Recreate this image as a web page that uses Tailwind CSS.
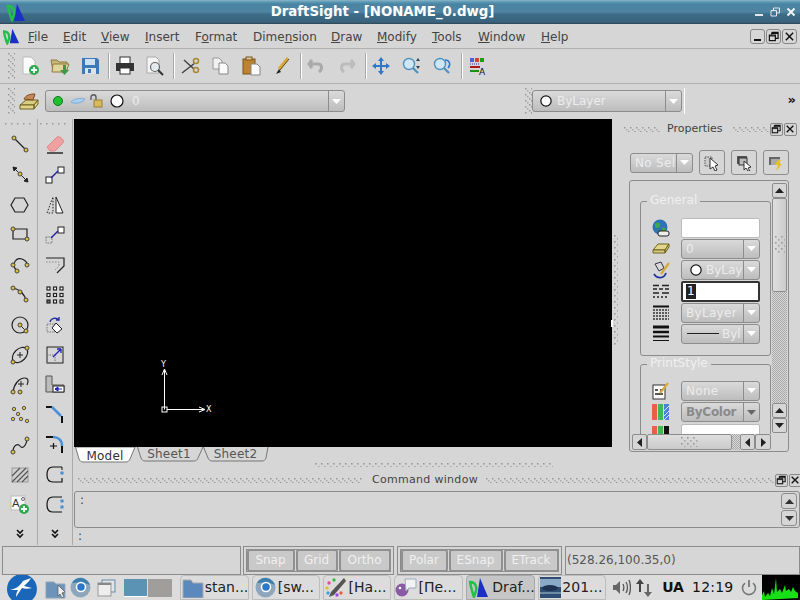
<!DOCTYPE html>
<html>
  <head>
    <title>DraftSight</title>
    <script src="https://cdn.jsdelivr.net/npm/@tailwindcss/browser@4"></script>
  </head>
  <body class="w-[800px] h-[600px] overflow-hidden bg-[#d6d6d6] font-['DejaVu_Sans',sans-serif] text-[#444] relative">
    <!-- shared patterns for the toolbar grips -->
    <svg width="0" height="0" class="absolute">
      <defs>
        <pattern id="grip" width="6" height="6" patternUnits="userSpaceOnUse">
          <rect x="0" y="0" width="1.5" height="1.5" fill="#999"/><rect x="2" y="2" width="1.5" height="1.5" fill="#aaa"/><rect x="4" y="4" width="1.5" height="1.5" fill="#999"/>
        </pattern>
        <pattern id="gripv" width="6" height="6" patternUnits="userSpaceOnUse">
          <rect x="0" y="0" width="1.6" height="1.6" fill="#9a9a9a"/><rect x="3" y="3" width="1.6" height="1.6" fill="#a6a6a6"/>
        </pattern>
        <pattern id="dith" width="2" height="2" patternUnits="userSpaceOnUse">
          <rect width="1" height="1" fill="#aaa"/><rect x="1" y="1" width="1" height="1" fill="#aaa"/>
        </pattern>
        <symbol id="arrow" viewBox="0 0 9 5"><path d="M0 0h9L4.500 5z" fill="#fff"/></symbol>
        <symbol id="restore" viewBox="0 0 12 12"><path d="M4 1.500h7v6.500H8M4 1.500V4M4 2.500h7" fill="none" stroke="#111" stroke-width="1.300"/><rect x="1.500" y="4.500" width="6.500" height="6" fill="none" stroke="#111" stroke-width="1.300"/><path d="M1.500 5.500h6.500" stroke="#111"/></symbol>
        <symbol id="close" viewBox="0 0 12 12"><path d="M2 2l8 8M10 2l-8 8" stroke="#111" stroke-width="1.600"/></symbol>
      </defs>
    </svg>

    <!-- title bar -->
    <div class="h-[24px] flex items-center pl-[2px] relative bg-[linear-gradient(#8fb4c4_0,#5a9ab5_2px,#4a83a2_4px,#4f84a2_12px,#3d6d89_14px,#3a627c_22px,#2c4656_24px)]">
      <svg class="w-[20px] h-[20px] ml-[3px]" viewBox="0 0 20 20"><path d="M12 2L20 19H9z" fill="#1b2fc4"/><path d="M3 4c5 0 7 4 6 9l-2 5C5 14 4 9 3 4z" fill="none" stroke="#22c04a" stroke-width="2.500"/></svg>
      <div class="flex-1 text-center text-white font-bold text-[13.300px] leading-none pr-[14px]">DraftSight - [NONAME_0.dwg]</div>
      <div class="flex items-center gap-[6px] pr-[4px]">
        <svg width="10" height="10" viewBox="0 0 10 10"><rect x="1" y="7" width="8" height="2" fill="#dfe8ee"/></svg>
        <svg width="10" height="10" viewBox="0 0 10 10"><path d="M3.500 1h6v5H7M3.500 1v2M1 3.500h5.500V9H1z" fill="none" stroke="#dfe8ee"/></svg>
        <svg width="10" height="10" viewBox="0 0 10 10"><path d="M1.500 1.500l7 7M8.500 1.500l-7 7" stroke="#eef3f6" stroke-width="2"/></svg>
      </div>
    </div>

    <!-- menu bar -->
    <div class="h-[25px] flex items-center border-b border-[#b0b0b0] pl-[3px] text-[12px] relative">
      <svg class="w-[17px] h-[17px]" viewBox="0 0 20 20"><path d="M11 1L19 18H8z" fill="#1b2fc4"/><path d="M1 4c5 0 7 4 6 9l-2 5C3 14 2 9 1 4z" fill="none" stroke="#22c04a" stroke-width="2.800"/></svg>
      <div class="flex ml-[8px] pt-[2px]">
        <span class="w-[35px]"><u>F</u>ile</span>
        <span class="w-[38px]"><u>E</u>dit</span>
        <span class="w-[44px]"><u>V</u>iew</span>
        <span class="w-[50px]"><u>I</u>nsert</span>
        <span class="w-[58px]">F<u>o</u>rmat</span>
        <span class="w-[78px]">Dime<u>n</u>sion</span>
        <span class="w-[46px]"><u>D</u>raw</span>
        <span class="w-[55px]"><u>M</u>odify</span>
        <span class="w-[46px]"><u>T</u>ools</span>
        <span class="w-[63px]"><u>W</u>indow</span>
        <span><u>H</u>elp</span>
      </div>
      <div class="ml-auto flex gap-[1px] pr-[3px]">
        <div class="w-[15px] h-[15px] border border-[#888] rounded-[3px] flex items-end justify-center pb-[2px]"><div class="w-[7px] h-[2px] bg-[#111]"></div></div>
        <div class="w-[15px] h-[15px] border border-[#888] rounded-[3px] flex items-center justify-center"><svg width="11" height="11"><use href="#restore"/></svg></div>
        <div class="w-[15px] h-[15px] border border-[#888] rounded-[3px] flex items-center justify-center"><svg width="11" height="11"><use href="#close"/></svg></div>
      </div>
    </div>

    <!-- standard toolbar -->
    <div class="h-[35px] flex items-center border-b border-[#b0b0b0] pl-[8px]">
      <svg width="7" height="26"><rect width="7" height="26" fill="url(#grip)"/></svg>
      <div class="flex items-center">
        <svg class="w-[20px] h-[20px] mx-[5px]" viewBox="0 0 20 20"><path d="M3 1h8l4 4v13H3z" fill="#fafafa" stroke="#bbb"/><circle cx="14" cy="14" r="5" fill="#2fa84f"/><path d="M14 11v6M11 14h6" stroke="#fff" stroke-width="1.800"/></svg>
        <svg class="w-[20px] h-[20px] mx-[5px]" viewBox="0 0 20 20"><path d="M1 4h6l2 2h8v9H3z" fill="#c9b777" stroke="#8d7b3e"/><path d="M3 8h16l-3 8H2z" fill="#e2d49c" stroke="#8d7b3e"/><path d="M13 9h3v5h3l-4.500 5L10 14h3z" fill="#3c9a4b"/></svg>
        <svg class="w-[20px] h-[18px] ml-[6px] mr-[5px]" viewBox="0 0 20 18"><path d="M1 1h15l2 2v14H1z" fill="#3f78b5"/><rect x="4" y="2" width="10" height="6" fill="#cfe0ef"/><rect x="4" y="11" width="11" height="6" fill="#dde3e8"/><rect x="7" y="12" width="3" height="4" fill="#3f78b5"/></svg>
        <div class="w-[2px] h-[26px] bg-white border-l border-[#a8a8a8] ml-[2px]"></div>
        <svg class="w-[20px] h-[20px] mx-[5px]" viewBox="0 0 20 20"><rect x="5" y="1" width="10" height="7" fill="#fff" stroke="#333"/><path d="M1 7h18v8H1z" fill="#333"/><rect x="5" y="12" width="10" height="6" fill="#fff" stroke="#333"/></svg>
        <svg class="w-[20px] h-[20px] mx-[5px]" viewBox="0 0 20 20"><path d="M2 1h9l3 3v13H2z" fill="#f4f4f4" stroke="#aaa"/><circle cx="10" cy="11" r="4.500" fill="#e2ebf0" stroke="#666" stroke-width="1.200"/><path d="M13 14l5 5" stroke="#333" stroke-width="2"/></svg>
        <div class="w-[2px] h-[26px] bg-white border-l border-[#a8a8a8] ml-[3px]"></div>
        <svg class="w-[20px] h-[18px] mx-[5px]" viewBox="0 0 20 18"><path d="M2 16L15 6M4 3l10 9" stroke="#444" stroke-width="1.500"/><circle cx="16" cy="4" r="2.500" fill="none" stroke="#a88a35" stroke-width="1.600"/><circle cx="16" cy="13" r="2.500" fill="none" stroke="#a88a35" stroke-width="1.600"/></svg>
        <svg class="w-[20px] h-[18px] ml-[6px] mr-[5px]" viewBox="0 0 20 18"><path d="M2 1h6l3 3v8H2z" fill="#f1f1f1" stroke="#999"/><path d="M8 6h6l3 3v8H8z" fill="#fafafa" stroke="#888"/></svg>
        <svg class="w-[20px] h-[20px] ml-[6px] mr-[5px]" viewBox="0 0 20 20"><rect x="1" y="3" width="12" height="15" fill="#bd8430" stroke="#7b5417"/><rect x="4" y="1" width="6" height="3" fill="#d8c7a0" stroke="#7b5417"/><path d="M9 8h6l3 3v8H9z" fill="#fafafa" stroke="#888"/></svg>
        <svg class="w-[20px] h-[20px] ml-[6px] mr-[5px]" viewBox="0 0 20 20"><path d="M15 2L6 13" stroke="#d8a838" stroke-width="3"/><path d="M6 13l-3 5 5-2z" fill="#222"/><path d="M16 3L7 14" stroke="#5d4a1c"/></svg>
        <div class="w-[2px] h-[26px] bg-white border-l border-[#a8a8a8] ml-[2px]"></div>
        <svg class="w-[20px] h-[18px] mx-[5px]" viewBox="0 0 20 18"><path d="M5 4L2 8l3 4M4 8h7c4 0 5 5 1 8" transform="translate(0 -1)" fill="none" stroke="#aaa" stroke-width="3"/></svg>
        <svg class="w-[20px] h-[18px] ml-[6px] mr-[5px]" viewBox="0 0 20 18"><path d="M13 4l3 4-3 4M14 8H7c-4 0-5 5-1 8" transform="translate(0 -1)" fill="none" stroke="#bcbcbc" stroke-width="3"/></svg>
        <div class="w-[2px] h-[26px] bg-white border-l border-[#a8a8a8] ml-[2px]"></div>
        <svg class="w-[20px] h-[18px] mx-[5px]" viewBox="0 0 20 18"><path d="M9 0l3 4h-2v4h4V6l4 3-4 3v-2h-4v4h2l-3 4-3-4h2v-4H4v2L0 9l4-3v2h4V4H6z" fill="#2f77c8"/></svg>
        <svg class="w-[20px] h-[18px] mx-[5px]" viewBox="0 0 20 18"><circle cx="7" cy="7" r="5.500" fill="#cfe6f5" stroke="#4f90bf" stroke-width="1.400"/><path d="M11 11l5 5" stroke="#4f90bf" stroke-width="2.200"/><path d="M16 1l2 3h-4zM16 12l2-3h-4z" fill="#345"/></svg>
        <svg class="w-[20px] h-[18px] ml-[6px] mr-[5px]" viewBox="0 0 20 18"><circle cx="7" cy="7" r="5.500" fill="#cfe6f5" stroke="#4f90bf" stroke-width="1.400"/><path d="M11 11l5 5" stroke="#4f90bf" stroke-width="2.200"/><path d="M12 3c5 0 6 5 3 8" fill="none" stroke="#2f77c8" stroke-width="1.500"/></svg>
        <div class="w-[2px] h-[26px] bg-white border-l border-[#a8a8a8] ml-[3px]"></div>
        <svg class="w-[18px] h-[20px] ml-[6px]" viewBox="0 0 18 20"><rect x="1" y="2" width="4" height="4" fill="#4a62d8"/><rect x="6" y="2" width="4" height="4" fill="#d04040"/><rect x="11" y="2" width="4" height="4" fill="#18a018"/><path d="M1 8h10" stroke="#2030a0" stroke-dasharray="1 1"/><path d="M1 11h10" stroke="#b01818" stroke-width="2"/><path d="M1 15h9" stroke="#189018" stroke-width="2"/><text x="10" y="19" font-size="9" font-family="DejaVu Sans" fill="#111">A</text></svg>
      </div>
    </div>

    <!-- layer toolbar -->
    <div class="h-[35px] flex items-center pl-[8px] pb-[1px] relative">
      <svg width="7" height="26" class="mr-[4px]"><rect width="7" height="26" fill="url(#grip)"/></svg>
      <svg class="w-[20px] h-[20px]" viewBox="0 0 20 20"><path d="M1 14l6-5h12l-4 5z" fill="#d8cc80" stroke="#6f6320"/><path d="M1 14h14v4H1zM15 14l4-5v4l-4 5z" fill="#e0d48a" stroke="#6f6320"/><path d="M5 8c2-4 6-5 11-5l-2 6z" fill="#c8895a" stroke="#7a4a26"/></svg>
      <div class="ml-[6px] w-[300px] h-[22px] flex rounded-[3px] border border-[#8c8c8c] bg-linear-to-b from-[#dadada] to-[#bdbdbd]">
        <div class="flex-1 flex items-center pl-[6px]">
          <svg class="w-[12px] h-[12px]" viewBox="0 0 12 12"><circle cx="6" cy="6" r="4.500" fill="#1fc02f" stroke="#0d7a18"/></svg>
          <svg class="w-[16px] h-[8px] ml-[6px]" viewBox="0 0 16 8"><path d="M1 5c3-4 10-4 14-3-1 3-10 6-14 3z" fill="#a8cff0" stroke="#6fa5d2" stroke-width="0.800"/></svg>
          <svg class="w-[14px] h-[16px] ml-[3px]" viewBox="0 0 14 16"><path d="M2 7V4c0-3 5-3 5 0v3" fill="none" stroke="#555" stroke-width="1.300"/><rect x="5" y="7" width="8" height="7" fill="#d9b95c" stroke="#8d7226" stroke-width="0.800"/></svg>
          <svg class="w-[14px] h-[14px] ml-[7px]" viewBox="0 0 14 14"><circle cx="7" cy="7" r="6" fill="#fff" stroke="#111" stroke-width="1.200"/></svg>
          <span class="ml-[8px] text-[12px] text-[#ececec]">0</span>
        </div>
        <div class="w-[16px] border-l border-[#8c8c8c] flex items-center justify-center"><svg width="9" height="5"><use href="#arrow"/></svg></div>
      </div>
      <svg width="7" height="26" class="ml-[180px]"><rect width="7" height="26" fill="url(#grip)"/></svg>
      <div class="w-[150px] h-[22px] flex rounded-[3px] border border-[#8c8c8c] bg-linear-to-b from-[#dadada] to-[#bdbdbd]">
        <div class="flex-1 flex items-center pl-[7px]">
          <svg class="w-[12px] h-[12px]" viewBox="0 0 14 14"><circle cx="7" cy="7" r="6" fill="#fff" stroke="#111" stroke-width="1.400"/></svg>
          <span class="ml-[5px] text-[12px] text-[#ececec]">ByLayer</span>
        </div>
        <div class="w-[16px] border-l border-[#8c8c8c] flex items-center justify-center"><svg width="9" height="5"><use href="#arrow"/></svg></div>
      </div>
      <div class="w-px h-[26px] bg-white ml-[2px]"></div>
      <span class="ml-auto pr-[4px] text-[13px] font-bold text-[#111] leading-none pb-[3px]">»</span>
    </div>

    <!-- workspace -->
    <div class="flex h-[426px] overflow-hidden">
      <!-- drawing tools -->
      <div class="w-[74px] shrink-0 flex pl-[3px]">
        <div class="w-[35px] border-r border-[#aaa] flex flex-col items-center pt-[4px]">
          <svg width="30" height="6" class="mb-[10px]"><rect width="30" height="6" fill="url(#grip)"/></svg>
          <div class="flex flex-col gap-[10px] items-center">
            <svg class="w-[20px] h-[20px]" viewBox="0 0 20 20"><path d="M4 3l12 12" stroke="#222" stroke-width="1.200"/><circle cx="4" cy="3" r="2" fill="#e0c040" stroke="#444"/><circle cx="16" cy="15" r="2" fill="#e0c040" stroke="#444"/></svg>
            <svg class="w-[20px] h-[20px]" viewBox="0 0 20 20"><path d="M3 2l15 15M3 2l1 4 3-3zM18 17l-4-1 3-3z" stroke="#222" fill="#222"/><circle cx="10" cy="9" r="2" fill="#e0c040" stroke="#444"/></svg>
            <svg class="w-[20px] h-[20px]" viewBox="0 0 20 20"><path d="M5 3h9l4 7-4 7H5l-4-7z" fill="none" stroke="#222" stroke-width="1.200"/></svg>
            <svg class="w-[20px] h-[20px]" viewBox="0 0 20 20"><path d="M4 5h14v10H4z" transform="translate(-1 -1)" fill="none" stroke="#222" stroke-width="1.200"/><circle cx="3" cy="4" r="2" fill="#e0c040" stroke="#444"/><circle cx="17" cy="14" r="2" fill="#e0c040" stroke="#444"/></svg>
            <svg class="w-[20px] h-[20px]" viewBox="0 0 20 20"><path d="M7 16C0 9 7 0 14 5c2 1 3 3 3 5" fill="none" stroke="#222" stroke-width="1.200"/><circle cx="3" cy="10" r="2" fill="#e0c040" stroke="#444"/><circle cx="7" cy="16" r="2" fill="#e0c040" stroke="#444"/><circle cx="17" cy="10" r="2" fill="#e0c040" stroke="#444"/></svg>
            <svg class="w-[20px] h-[20px]" viewBox="0 0 20 20"><path d="M3 3c6 1 12 6 13 13" fill="none" stroke="#222" stroke-width="1.200"/><circle cx="3" cy="3" r="2" fill="#e0c040" stroke="#444"/><circle cx="10" cy="7" r="2" fill="#e0c040" stroke="#444"/><circle cx="16" cy="15" r="2" fill="#e0c040" stroke="#444"/></svg>
            <svg class="w-[20px] h-[20px]" viewBox="0 0 20 20"><circle cx="10" cy="10" r="8" fill="none" stroke="#222" stroke-width="1.200"/><path d="M10 10l6 6" stroke="#222"/><circle cx="10" cy="10" r="2" fill="#e0c040" stroke="#444"/><circle cx="16" cy="16" r="2" fill="#e0c040" stroke="#444"/></svg>
            <svg class="w-[20px] h-[20px]" viewBox="0 0 20 20"><ellipse cx="10" cy="10" rx="9" ry="6" transform="rotate(-45 10 10)" fill="none" stroke="#222" stroke-width="1.200"/><path d="M7 10h6M10 7v6" stroke="#222"/><circle cx="3" cy="17" r="2" fill="#e0c040" stroke="#444"/><circle cx="17" cy="3" r="2" fill="#e0c040" stroke="#444"/></svg>
            <svg class="w-[20px] h-[20px]" viewBox="0 0 20 20"><path d="M3 17C4 9 9 3 15 3c3 0 4 3 2 7" fill="none" stroke="#222" stroke-width="1.200"/><path d="M8 9h6M11 6v6" stroke="#222"/><circle cx="3" cy="17" r="2" fill="#e0c040" stroke="#444"/><circle cx="10" cy="17" r="2" fill="#e0c040" stroke="#444"/></svg>
            <svg class="w-[20px] h-[20px]" viewBox="0 0 20 20"><g fill="#e0c040" stroke="#555"><circle cx="4" cy="4" r="1.700"/><circle cx="14" cy="3" r="1.700"/><circle cx="8" cy="9" r="1.700"/><circle cx="3" cy="14" r="1.700"/><circle cx="11" cy="14" r="1.700"/><circle cx="17" cy="16" r="1.700"/></g></svg>
            <svg class="w-[20px] h-[20px]" viewBox="0 0 20 20"><path d="M3 17c0-7 5-9 7-6s6 1 7-7" fill="none" stroke="#222" stroke-width="1.200"/><circle cx="3" cy="17" r="2" fill="#e0c040" stroke="#444"/><circle cx="17" cy="4" r="2" fill="#e0c040" stroke="#444"/></svg>
            <svg class="w-[20px] h-[20px]" viewBox="0 0 20 20"><rect x="2" y="3" width="16" height="14" fill="#cfcfcf" stroke="#999"/><path d="M2 11l8-8M2 17L16 3M7 17L18 6M12 17l6-6" stroke="#555" stroke-width="1.200"/></svg>
            <svg class="w-[20px] h-[20px]" viewBox="0 0 20 20"><rect x="1" y="1" width="14" height="14" fill="#fafafa" stroke="#bbb"/><text x="2" y="12" font-size="11" font-family="DejaVu Sans" fill="#333">A</text><circle cx="13" cy="4" r="1.500" fill="none" stroke="#666"/><circle cx="14" cy="14" r="5" fill="#2fa84f"/><path d="M14 11v6M11 14h6" stroke="#fff" stroke-width="1.800"/></svg>
            <svg class="w-[20px] h-[20px]" viewBox="0 0 20 20"><path d="M7 6l3 3 3-3M7 10l3 3 3-3" transform="translate(0 -1)" fill="none" stroke="#111" stroke-width="1.600"/></svg>
          </div>
        </div>
        <div class="w-[35px] border-r border-[#aaa] flex flex-col items-center pt-[4px]">
          <svg width="30" height="6" class="mb-[10px]"><rect width="30" height="6" fill="url(#grip)"/></svg>
          <div class="flex flex-col gap-[10px] items-center">
            <svg class="w-[20px] h-[20px]" viewBox="0 0 20 20"><path d="M2 12L12 2c2-1 5 1 6 3 1 1 0 3-1 4l-7 7H5z" fill="#f0a0a0" stroke="#d88"/><path d="M2 18h16" stroke="#555" stroke-width="2"/></svg>
            <svg class="w-[20px] h-[20px]" viewBox="0 0 20 20"><rect x="1" y="12" width="6" height="6" fill="#fff" stroke="#222"/><rect x="13" y="2" width="6" height="6" fill="#fff" stroke="#222"/><path d="M6 13l7-7" stroke="#2020a0" stroke-width="1.500"/></svg>
            <svg class="w-[20px] h-[20px]" viewBox="0 0 20 20"><path d="M2 18L8 2v16z" fill="none" stroke="#222" stroke-dasharray="1.500 1.500"/><path d="M11 2l7 16h-7z" fill="#fff" stroke="#222"/></svg>
            <svg class="w-[20px] h-[20px]" viewBox="0 0 20 20"><rect x="1" y="12" width="6" height="6" fill="none" stroke="#777" stroke-dasharray="1.500 1"/><rect x="13" y="2" width="6" height="6" fill="#fff" stroke="#222"/><path d="M6 13l7-7" stroke="#2020a0" stroke-width="1.500"/></svg>
            <svg class="w-[20px] h-[20px]" viewBox="0 0 20 20"><path d="M1 3h18v8l-7 7" fill="none" stroke="#222" stroke-width="1.200"/><path d="M1 7h13v4l-4 4" fill="none" stroke="#888" stroke-dasharray="1.500 1.500"/></svg>
            <svg class="w-[20px] h-[20px]" viewBox="0 0 20 20"><g fill="#fff" stroke="#222" stroke-width="1.200"><rect x="2" y="2" width="3" height="3"/><rect x="8.500" y="2" width="3" height="3"/><rect x="15" y="2" width="3" height="3"/><rect x="2" y="8.500" width="3" height="3"/><rect x="8.500" y="8.500" width="3" height="3"/><rect x="15" y="8.500" width="3" height="3"/><rect x="2" y="15" width="3" height="3" fill="#777"/><rect x="8.500" y="15" width="3" height="3"/><rect x="15" y="15" width="3" height="3"/></g></svg>
            <svg class="w-[20px] h-[20px]" viewBox="0 0 20 20"><rect x="2" y="9" width="8" height="8" fill="none" stroke="#777" stroke-dasharray="1.500 1"/><path d="M11 8l6 6-5 4-5-5z" fill="#fff" stroke="#222"/><path d="M5 7c1-4 6-5 9-2M14 2v3h-3" fill="none" stroke="#2030a0" stroke-width="1.300"/></svg>
            <svg class="w-[20px] h-[20px]" viewBox="0 0 20 20"><rect x="2" y="2" width="16" height="16" fill="none" stroke="#222"/><rect x="2" y="10" width="8" height="8" fill="none" stroke="#777" stroke-dasharray="1.500 1"/><path d="M8 12l8-8M16 4v4M16 4h-4" stroke="#2020c0" stroke-width="1.300" fill="none"/></svg>
            <svg class="w-[20px] h-[20px]" viewBox="0 0 20 20"><path d="M1 1h6v9h12v7H1z" fill="#bdbdbd" stroke="#555"/><rect x="8" y="11" width="11" height="6" fill="#fff" stroke="#222"/><path d="M10 14h7M10 14l3-2v4z" stroke="#2020c0" fill="#2020c0"/></svg>
            <svg class="w-[20px] h-[20px]" viewBox="0 0 20 20"><path d="M1 2h6" stroke="#111" stroke-width="2"/><path d="M7 2l9 9" stroke="#4a90d9" stroke-width="2.500"/><path d="M17 11v7" stroke="#111" stroke-width="2"/></svg>
            <svg class="w-[20px] h-[20px]" viewBox="0 0 20 20"><path d="M1 2h7" stroke="#111" stroke-width="2"/><path d="M8 2c5 0 9 3 9 9" fill="none" stroke="#4a90d9" stroke-width="2.500"/><path d="M17 11v7" stroke="#111" stroke-width="2"/><path d="M5 11h7M8.500 8v6" stroke="#111" stroke-width="1.200"/></svg>
            <svg class="w-[20px] h-[20px]" viewBox="0 0 20 20"><path d="M17 2H8C3 2 2 6 2 10s1 7 6 7h9v-4" fill="none" stroke="#111" stroke-width="1.200"/><path d="M17 2v3" stroke="#111"/><circle cx="17" cy="8" r="1.800" fill="#4a90d9"/></svg>
            <svg class="w-[20px] h-[20px]" viewBox="0 0 20 20"><path d="M17 2H8C3 2 2 6 2 10s1 7 6 7h9" fill="none" stroke="#111" stroke-width="1.200"/><circle cx="17" cy="6" r="1.800" fill="#4a90d9"/><circle cx="17" cy="12" r="1.800" fill="#4a90d9"/></svg>
            <svg class="w-[20px] h-[20px]" viewBox="0 0 20 20"><path d="M7 6l3 3 3-3M7 10l3 3 3-3" transform="translate(0 -1)" fill="none" stroke="#111" stroke-width="1.600"/></svg>
          </div>
        </div>
      </div>

      <!-- drawing area and command window -->
      <div class="flex-1 min-w-0 flex flex-col">
        <div class="flex h-[350px] shrink-0">
          <div class="w-[538px] shrink-0 flex flex-col">
            <div class="h-[328px] bg-black relative">
              <svg class="absolute left-[85px] top-[238px]" width="60" height="60" viewBox="0 0 60 60">
                <path d="M5.500 52.500V13M3 18l2.500-6 2.500 6M8 52.500h37M40 50l6 2.500-6 2.500" fill="none" stroke="#fff"/>
                <rect x="3" y="50" width="5" height="5" fill="none" stroke="#fff"/>
                <text x="2" y="10" font-size="8" font-family="DejaVu Sans" fill="#fff">Y</text>
                <text x="47" y="55" font-size="8" font-family="DejaVu Sans" fill="#fff">X</text>
              </svg>
            </div>
            <!-- sheet tabs -->
            <div class="relative flex h-[22px] text-[12px] tracking-[0.2px]">
              <svg class="absolute left-0 top-0" width="200" height="18" viewBox="0 0 200 18">
                <path d="M63.500 0L67 11c1 2 2 3 4 3h49c2 0 3-1 4-3l5-11" fill="none" stroke="#777"/>
                <path d="M129.500 0L134 11c1 2 2 3 4 3h50c2 0 3-1 4-3l2-11" fill="none" stroke="#777"/>
                <path d="M1.500 0L5 12c1 2 2 3 4 3h43c2 0 3-1 4-3l5-12z" fill="#fff" stroke="#777"/>
              </svg>
              <div class="relative ml-[1px] w-[60px] text-center leading-[16px] pt-[1px] text-[#333]">Model</div>
              <div class="relative w-[68px] text-center leading-[15px] text-[#555]">Sheet1</div>
              <div class="relative w-[65px] text-center leading-[15px] text-[#555]">Sheet2</div>
            </div>
          </div>

          <!-- properties palette -->
          <div class="flex-1 min-w-0 relative">
            <div class="absolute left-[-1px] top-[201px] w-[2px] h-[7px] bg-white"></div>
            <svg class="absolute left-[2px] top-[116px]" width="4" height="110"><rect width="4" height="110" fill="url(#gripv)"/></svg>
            <div class="h-[19px] flex items-center pt-[1px] pl-[12px]">
              <svg width="36" height="5"><rect width="36" height="5" fill="url(#grip)"/></svg>
              <span class="ml-[7px] pt-[1px] text-[11px] text-[#444]">Properties</span>
              <svg class="ml-[10px]" width="36" height="5"><rect width="36" height="5" fill="url(#grip)"/></svg>
              <div class="ml-[1px] w-[13px] h-[13px] border border-[#888] rounded-[2px] flex items-center justify-center"><svg width="10" height="10"><use href="#restore"/></svg></div>
              <div class="ml-[1px] w-[13px] h-[13px] border border-[#888] rounded-[2px] flex items-center justify-center"><svg width="10" height="10"><use href="#close"/></svg></div>
            </div>
            <div class="flex items-center h-[25px] mt-[12px] pl-[18px]">
              <div class="w-[63px] h-[20px] flex rounded-[3px] border border-[#8c8c8c] bg-linear-to-b from-[#dadada] to-[#bdbdbd]">
                <div class="flex-1 pl-[4px] text-[12px] leading-[19px] text-[#ececec] tracking-[0.3px] whitespace-nowrap">No Sel</div>
                <div class="w-[16px] border-l border-[#8c8c8c] flex items-center justify-center"><svg width="9" height="5"><use href="#arrow"/></svg></div>
              </div>
              <div class="ml-[6px] w-[26px] h-[25px] rounded-[3px] border border-[#8c8c8c] flex items-center justify-center">
                <svg width="16" height="16" viewBox="0 0 16 16"><rect x="1" y="2" width="7" height="9" fill="#ccc" stroke="#555" stroke-dasharray="1.500 1"/><path d="M6 3l8 7-3 1 2 4-2 1-2-4-3 2z" fill="#fff" stroke="#333"/></svg>
              </div>
              <div class="ml-[6px] w-[26px] h-[25px] rounded-[3px] border border-[#8c8c8c] flex items-center justify-center">
                <svg width="16" height="16" viewBox="0 0 16 16"><rect x="1" y="1" width="10" height="8" fill="#555"/><rect x="3" y="3" width="8" height="7" fill="#bbb" stroke="#333"/><path d="M8 6l7 6-3 1 2 3-2 0-2-3-2 2z" fill="#fff" stroke="#333"/></svg>
              </div>
              <div class="ml-[6px] w-[26px] h-[25px] rounded-[3px] border border-[#8c8c8c] flex items-center justify-center">
                <svg width="16" height="16" viewBox="0 0 16 16"><rect x="1" y="2" width="11" height="8" fill="#666"/><rect x="3" y="4" width="9" height="6" fill="#aaa"/><path d="M10 5l-3 5h3l-2 6 6-7h-3l2-4z" fill="#e8c020"/></svg>
              </div>
            </div>

            <!-- scroll area -->
            <div class="absolute left-[17px] top-[61px] w-[160px] h-[272px] border border-[#8c8c8c] rounded-[3px] overflow-hidden">
              <div class="absolute left-0 top-0 w-[142px] h-[253px] overflow-hidden">
                <div class="absolute left-[10px] top-[20px] w-[131px] h-[155px] border border-[#8c8c8c] rounded-[3px]">
                  <span class="absolute left-[6px] -top-[8px] px-[3px] bg-[#d6d6d6] text-[12px] leading-none text-[#f0f0f0]">General</span>
                  <div class="absolute left-[11px] top-[15px] w-[108px] flex flex-col">
                    <div class="flex items-center h-[21px]">
                      <svg class="w-[18px] h-[18px] shrink-0" viewBox="0 0 18 18"><circle cx="8" cy="8" r="7.500" fill="#2f72b8"/><path d="M3 5c3-3 6-1 5 2s-4 2-5 1zM10 9c3-1 5 1 3 4s-4 1-3-4z" fill="#3fa84a"/><rect x="6" y="12" width="11" height="5" rx="2" fill="#eee" stroke="#222"/></svg>
                      <div class="ml-[11px] w-[79px] h-[20px] bg-white rounded-[2px] border border-[#bbb]"></div>
                    </div>
                    <div class="flex items-center h-[21px]">
                      <svg class="w-[18px] h-[13px] shrink-0" viewBox="0 0 18 13"><path d="M1 8l5-6h11l-4 6z" fill="#e2d68c" stroke="#6f6320"/><path d="M1 8h12v3H1zM13 8l4-6v3l-4 6z" fill="#d8cc80" stroke="#6f6320"/></svg>
                      <div class="ml-[11px] w-[79px] h-[20px] flex rounded-[3px] border border-[#8c8c8c] bg-linear-to-b from-[#dadada] to-[#bdbdbd]">
                        <div class="flex-1 pl-[4px] text-[12px] leading-[19px] text-[#ececec]">0</div>
                        <div class="w-[16px] border-l border-[#8c8c8c] flex items-center justify-center"><svg width="9" height="5"><use href="#arrow"/></svg></div>
                      </div>
                    </div>
                    <div class="flex items-center h-[21px]">
                      <svg class="w-[18px] h-[18px] shrink-0" viewBox="0 0 18 18"><path d="M3 3l6-2 3 6-5 3z" fill="#d8d8d8" stroke="#334"/><path d="M17 2L9 13" stroke="#d8a838" stroke-width="2.200"/><path d="M2 13c3 5 10 5 12-1" fill="none" stroke="#2030a0" stroke-width="1.800"/></svg>
                      <div class="ml-[11px] w-[79px] h-[20px] flex rounded-[3px] border border-[#8c8c8c] bg-linear-to-b from-[#dadada] to-[#bdbdbd]">
                        <div class="flex-1 min-w-0 flex items-center pl-[8px] overflow-hidden">
                          <svg class="w-[12px] h-[12px] shrink-0" viewBox="0 0 14 14"><circle cx="7" cy="7" r="6" fill="#fff" stroke="#111" stroke-width="1.400"/></svg>
                          <span class="ml-[4px] text-[12px] text-[#ececec]">ByLay</span>
                        </div>
                        <div class="w-[16px] border-l border-[#8c8c8c] flex items-center justify-center"><svg width="9" height="5"><use href="#arrow"/></svg></div>
                      </div>
                    </div>
                    <div class="flex items-center h-[22px]">
                      <svg class="w-[18px] h-[15px] shrink-0" viewBox="0 0 18 15"><path d="M1 1.500h6M10 1.500h7M1 5h4M7 5h4M13 5h4M1 9h6M10 9h7M1 13h2M5 13h2M9 13h2M13 13h2" stroke="#222" stroke-width="1.600"/></svg>
                      <div class="ml-[11px] w-[79px] h-[21px] bg-white border-2 border-[#333] rounded-[2px] flex items-center pl-[3px]"><span class="bg-[#222] text-white text-[12px] leading-[15px] px-[1px]">1</span></div>
                    </div>
                    <div class="flex items-center h-[21px]">
                      <svg class="w-[18px] h-[16px] shrink-0" viewBox="0 0 18 16"><path d="M1 1.500h16" stroke="#111" stroke-width="2"/><path d="M1 5h16M1 8h16M1 11h16M1 14h16" stroke="#333" stroke-width="1.500" stroke-dasharray="2 1"/></svg>
                      <div class="ml-[11px] w-[79px] h-[20px] flex rounded-[3px] border border-[#8c8c8c] bg-linear-to-b from-[#dadada] to-[#bdbdbd]">
                        <div class="flex-1 pl-[4px] text-[12px] leading-[19px] text-[#ececec] tracking-[0.3px]">ByLayer</div>
                        <div class="w-[16px] border-l border-[#8c8c8c] flex items-center justify-center"><svg width="9" height="5"><use href="#arrow"/></svg></div>
                      </div>
                    </div>
                    <div class="flex items-center h-[21px]">
                      <svg class="w-[18px] h-[17px] shrink-0" viewBox="0 0 18 17"><path d="M1 2h16" stroke="#111" stroke-width="3"/><path d="M1 7h16" stroke="#111" stroke-width="2.500"/><path d="M1 11.500h16" stroke="#111" stroke-width="2"/><path d="M1 15.500h16" stroke="#111"/></svg>
                      <div class="ml-[11px] w-[79px] h-[20px] flex rounded-[3px] border border-[#8c8c8c] bg-linear-to-b from-[#dadada] to-[#bdbdbd]">
                        <div class="flex-1 min-w-0 flex items-center pl-[5px] overflow-hidden">
                          <div class="w-[32px] h-px bg-[#222] shrink-0"></div>
                          <span class="ml-[3px] text-[12px] text-[#ececec]">Byl</span>
                        </div>
                        <div class="w-[16px] border-l border-[#8c8c8c] flex items-center justify-center"><svg width="9" height="5"><use href="#arrow"/></svg></div>
                      </div>
                    </div>
                  </div>
                </div>
                <div class="absolute left-[10px] top-[183px] w-[131px] h-[120px] border border-[#8c8c8c] rounded-[3px]">
                  <span class="absolute left-[6px] -top-[8px] px-[3px] bg-[#d6d6d6] text-[12px] leading-none text-[#f0f0f0]">PrintStyle</span>
                  <div class="absolute left-[11px] top-[15px] w-[108px] flex flex-col">
                    <div class="flex items-center h-[21px]">
                      <svg class="w-[18px] h-[18px] shrink-0" viewBox="0 0 18 18"><rect x="1" y="3" width="12" height="14" fill="#fafafa" stroke="#333"/><path d="M3 8h3M8 8h3M3 12h8" stroke="#222" stroke-width="1.500"/><path d="M16 1L8 11" stroke="#d8a838" stroke-width="2.200"/></svg>
                      <div class="ml-[11px] w-[79px] h-[20px] flex rounded-[3px] border border-[#8c8c8c] bg-linear-to-b from-[#dadada] to-[#bdbdbd]">
                        <div class="flex-1 pl-[4px] text-[12px] leading-[19px] text-[#ececec] tracking-[0.3px]">None</div>
                        <div class="w-[16px] border-l border-[#8c8c8c] flex items-center justify-center"><svg width="9" height="5"><use href="#arrow"/></svg></div>
                      </div>
                    </div>
                    <div class="flex items-center h-[22px]">
                      <svg class="w-[18px] h-[18px] shrink-0" viewBox="0 0 18 18"><rect x="0" y="1" width="5" height="16" fill="#e8604a"/><rect x="6" y="1" width="5" height="16" fill="#3fb85a"/><rect x="12" y="1" width="5" height="16" fill="#4a82d8"/><path d="M12 8l5-5M12 13l5-5M12 17l5-5" stroke="#dce8f8"/></svg>
                      <div class="ml-[11px] w-[79px] h-[20px] flex rounded-[3px] border border-[#8c8c8c] bg-linear-to-b from-[#dadada] to-[#bdbdbd]">
                        <div class="flex-1 pl-[4px] text-[12px] leading-[19px] text-[#8a8a8a] font-bold tracking-[-0.3px]">ByColor</div>
                        <div class="w-[16px] border-l border-[#8c8c8c] flex items-center justify-center"><svg width="9" height="5"><path d="M0 0h9L4.500 5z" fill="#666"/></svg></div>
                      </div>
                    </div>
                    <div class="flex items-center h-[21px]">
                      <svg class="w-[18px] h-[18px] shrink-0" viewBox="0 0 18 18"><rect x="0" y="1" width="5" height="16" fill="#e8604a"/><rect x="6" y="1" width="5" height="16" fill="#3fb85a"/><rect x="12" y="1" width="5" height="16" fill="#111"/></svg>
                      <div class="ml-[11px] w-[79px] h-[20px] bg-white rounded-[2px] border border-[#bbb]"></div>
                    </div>
                  </div>
                </div>
              </div>
              <!-- vertical scrollbar -->
              <div class="absolute right-[1px] top-[2px] w-[15px] h-[250px] flex flex-col">
                <div class="h-[15px] border border-[#8c8c8c] rounded-[2px] flex items-center justify-center"><svg width="9" height="5"><path d="M0 5h9L4.500 0z" fill="#222"/></svg></div>
                <div class="h-[94px] border border-[#8c8c8c] rounded-[2px] bg-linear-to-r from-[#dedede] to-[#cbcbcb] flex items-center justify-center"><svg width="10" height="18"><rect width="10" height="18" fill="url(#gripv)"/></svg></div>
                <svg class="flex-1 w-full"><rect width="100%" height="100%" fill="url(#dith)"/></svg>
                <div class="h-[15px] border border-[#8c8c8c] rounded-[2px] flex items-center justify-center"><svg width="9" height="5"><path d="M0 5h9L4.500 0z" fill="#222"/></svg></div>
                <div class="h-[15px] border border-[#8c8c8c] rounded-[2px] flex items-center justify-center"><svg width="9" height="5"><path d="M0 0h9L4.500 5z" fill="#222"/></svg></div>
              </div>
              <!-- horizontal scrollbar -->
              <div class="absolute left-[2px] top-[253px] w-[139px] h-[16px] flex">
                <div class="w-[15px] border border-[#8c8c8c] rounded-[2px] flex items-center justify-center"><svg width="5" height="9"><path d="M5 0v9L0 4.500z" fill="#222"/></svg></div>
                <div class="w-[85px] border border-[#8c8c8c] rounded-[2px] bg-linear-to-b from-[#dedede] to-[#cbcbcb] flex items-center justify-center"><svg width="18" height="10"><rect width="18" height="10" fill="url(#gripv)"/></svg></div>
                <svg class="flex-1 h-full"><rect width="100%" height="100%" fill="url(#dith)"/></svg>
                <div class="w-[15px] border border-[#8c8c8c] rounded-[2px] flex items-center justify-center"><svg width="5" height="9"><path d="M5 0v9L0 4.500z" fill="#222"/></svg></div>
                <div class="w-[16px] border border-[#8c8c8c] rounded-[2px] flex items-center justify-center"><svg width="5" height="9"><path d="M0 0v9L5 4.500z" fill="#222"/></svg></div>
              </div>
            </div>
          </div>
        </div>

        <!-- command window -->
        <div class="flex-1 relative flex flex-col">
          <svg class="absolute left-[241px] -top-[6px]" width="238" height="4"><rect width="238" height="4" fill="url(#gripv)"/></svg>
          <div class="h-[22px] flex items-center pl-[4px]">
            <svg width="284" height="5" class="shrink-0"><rect width="284" height="5" fill="url(#grip)"/></svg>
            <span class="ml-[10px] text-[11px] tracking-[0.3px] whitespace-nowrap">Command window</span>
            <svg class="ml-[8px] shrink-0" width="288" height="5"><rect width="288" height="5" fill="url(#grip)"/></svg>
            <div class="ml-[1px] w-[13px] h-[13px] shrink-0 border border-[#888] rounded-[2px] flex items-center justify-center"><svg width="10" height="10"><use href="#restore"/></svg></div>
            <div class="ml-[1px] w-[13px] h-[13px] shrink-0 border border-[#888] rounded-[2px] flex items-center justify-center"><svg width="10" height="10"><use href="#close"/></svg></div>
          </div>
          <div class="h-[37px] border border-[#8c8c8c] rounded-[3px] relative pl-[5px] text-[12px] leading-[14px] pt-[1px]">
            :
            <div class="absolute right-[2px] top-[1px] w-[16px] flex flex-col gap-[1px]">
              <div class="h-[16px] border border-[#8c8c8c] rounded-[3px] flex items-center justify-center"><svg width="9" height="5"><path d="M0 5h9L4.500 0z" fill="#333"/></svg></div>
              <div class="h-[16px] border border-[#8c8c8c] rounded-[3px] flex items-center justify-center"><svg width="9" height="5"><path d="M0 0h9L4.500 5z" fill="#333"/></svg></div>
            </div>
          </div>
          <div class="pl-[4px] text-[12px] leading-[16px]">:</div>
        </div>
      </div>
    </div>

    <!-- status bar -->
    <div class="h-[30px] flex items-center pl-[2px] gap-[2px]">
      <div class="w-[239px] h-[29px] border border-[#8c8c8c]"></div>
      <div class="h-[29px] w-[151px] border border-[#8c8c8c] flex items-center justify-center gap-[1px] shadow-[inset_0_0_0_2px_#d6d6d6,inset_0_0_0_3px_#8c8c8c] text-[12px] text-[#f0f0f0]">
        <div class="w-[48px] h-[23px] border-2 border-[#909090] rounded-[3px] bg-[#c9c9c9] text-center leading-[19px]">Snap</div>
        <div class="w-[42px] h-[23px] border-2 border-[#909090] rounded-[3px] bg-[#c9c9c9] text-center leading-[19px]">Grid</div>
        <div class="w-[52px] h-[23px] border-2 border-[#909090] rounded-[3px] bg-[#c9c9c9] text-center leading-[19px]">Ortho</div>
      </div>
      <div class="ml-[1px] h-[29px] w-[165px] border border-[#8c8c8c] flex items-center justify-center gap-[1px] shadow-[inset_0_0_0_2px_#d6d6d6,inset_0_0_0_3px_#8c8c8c] text-[12px] text-[#f0f0f0]">
        <div class="w-[47px] h-[23px] border-2 border-[#909090] rounded-[3px] bg-[#c9c9c9] text-center leading-[19px]">Polar</div>
        <div class="w-[54px] h-[23px] border-2 border-[#909090] rounded-[3px] bg-[#c9c9c9] text-center leading-[19px]">ESnap</div>
        <div class="w-[55px] h-[23px] border-2 border-[#909090] rounded-[3px] bg-[#c9c9c9] text-center leading-[19px]">ETrack</div>
      </div>
      <div class="ml-[1px] flex-1 h-[29px] border border-[#8c8c8c] text-[12px] leading-[27px] pl-[1px] text-[#555]">(528.26,100.35,0)</div>
    </div>

    <!-- desktop panel -->
    <div class="h-[25px] flex items-center bg-[#dcdcdc] text-[14px] text-[#222] overflow-hidden">
      <svg class="ml-[7px] w-[30px] h-[25px]" viewBox="0 0 30 25"><circle cx="15" cy="14" r="15" fill="#1a66b8"/><path d="M3 15c6-1 10-4 13-9l8-3c-2 4-5 6-7 8l8 2c-4 1-7 1-10 0l-6 9c0-3 1-5 2-7z" fill="#fff"/></svg>
      <svg class="ml-[8px] w-[22px] h-[22px]" viewBox="0 0 22 22"><path d="M1 5h8l2 2h9v14H1z" fill="#6d93b8" stroke="#8fa6bb"/><path d="M13 8l7 7-3 1 2 4-2 1-2-4-2 2z" fill="#eee" stroke="#555" stroke-width="0.700"/></svg>
      <svg class="ml-[3px] w-[21px] h-[21px]" viewBox="0 0 21 21"><circle cx="10.500" cy="10.500" r="10" fill="#8ea6bc"/><path d="M2 6C6-1 16-1 20 8c-5-3-12-3-18-2z" fill="#3a7fb0"/><circle cx="11" cy="10" r="4.500" fill="#2a78c8" stroke="#fff" stroke-width="1.500"/></svg>
      <svg class="ml-[6px] w-[19px] h-[18px]" viewBox="0 0 19 18"><rect x="5" y="1" width="13" height="12" fill="#dfe5ea" stroke="#6d8aa5"/><rect x="1" y="4" width="13" height="13" fill="#eee" stroke="#999"/><path d="M1 5h13" stroke="#888" stroke-width="2"/></svg>
      <div class="ml-[8px] w-[23px] h-[18px] bg-[#5b93b4] border-b border-white"></div>
      <div class="ml-[1px] w-[24px] h-[18px] bg-[#a09e9b]"></div>
      <div class="ml-[8px] w-[69px] h-[25px] border border-[#bdbdbd] rounded-t-[4px] flex items-center pl-[1px]">
        <svg class="w-[22px] h-[20px] shrink-0" viewBox="0 0 22 20"><path d="M1 2h8l2 3h10v15H1z" fill="#5c89bc" stroke="#aaa"/></svg><span class="ml-px">stan...</span>
      </div>
      <div class="ml-[3px] w-[68px] h-[25px] border border-[#bdbdbd] rounded-t-[4px] flex items-center pl-[2px]">
        <svg class="w-[21px] h-[21px] shrink-0" viewBox="0 0 21 21"><circle cx="10.500" cy="10.500" r="10" fill="#8ea6bc"/><path d="M2 6C6-1 16-1 20 8c-5-3-12-3-18-2z" fill="#3a7fb0"/><circle cx="11" cy="10" r="4.500" fill="#2a78c8" stroke="#fff" stroke-width="1.500"/></svg><span class="ml-[2px]">[sw...</span>
      </div>
      <div class="ml-[3px] w-[69px] h-[25px] border border-[#bdbdbd] rounded-t-[4px] flex items-center pl-[1px]">
        <svg class="w-[22px] h-[21px] shrink-0" viewBox="0 0 22 21"><path d="M19 1L6 15l-2 5 5-2L21 4z" fill="#555"/><g><circle cx="4" cy="6" r="1.700" fill="#e84a9a"/><circle cx="9" cy="3" r="1.700" fill="#3fb84a"/><circle cx="2" cy="11" r="1.700" fill="#e8c020"/><circle cx="3" cy="16" r="1.700" fill="#3fa0e0"/><circle cx="16" cy="16" r="1.700" fill="#e8603a"/><circle cx="12" cy="18" r="1.700" fill="#9a4ae8"/></g></svg><span class="ml-[2px]">[На...</span>
      </div>
      <div class="ml-[3px] w-[69px] h-[25px] border border-[#bdbdbd] rounded-t-[4px] flex items-center">
        <svg class="w-[22px] h-[21px] shrink-0" viewBox="0 0 22 21"><circle cx="7" cy="13" r="6.500" fill="#8a5aa5"/><circle cx="5" cy="11" r="1.300" fill="#fff"/><path d="M10 2h11v9H14l-3 3z" fill="#f3f3f3" stroke="#9ab"/></svg><span class="ml-px">[Пе...</span>
      </div>
      <div class="ml-[3px] w-[69px] h-[25px] border border-[#a8a8a8] rounded-t-[4px] bg-[#c6c6c6] flex items-center pl-[2px]">
        <svg class="w-[20px] h-[21px] shrink-0" viewBox="0 0 20 21"><path d="M11 1L19 20H8z" fill="#1b2fc4"/><path d="M1 5c5 0 7 4 6 9l-2 6C3 15 2 10 1 5z" fill="none" stroke="#22c04a" stroke-width="2.500"/></svg><span class="ml-[3px]">Draf...</span>
      </div>
      <div class="ml-[3px] w-[68px] h-[25px] border border-[#bdbdbd] rounded-t-[4px] flex items-center pl-[1px]">
        <svg class="w-[21px] h-[21px] shrink-0" viewBox="0 0 21 21"><rect width="21" height="21" fill="#2f4d72"/><rect y="2" width="21" height="8" fill="#8aa9c6"/><ellipse cx="10" cy="11" rx="8" ry="3" fill="#1d3350"/><path d="M0 16h21" stroke="#6f8aa5" stroke-width="2"/></svg><span class="ml-[1px]">201...</span>
      </div>
      <svg class="ml-[6px] w-[19px] h-[17px]" viewBox="0 0 19 17"><path d="M1 6h3l4-4v13l-4-4H1z" fill="#666"/><path d="M11 5c1 2 1 5 0 7M14 3c2 3 2 8 0 11M17 1c2 4 2 11 0 15" fill="none" stroke="#555" stroke-width="1.300"/></svg>
      <svg class="ml-[4px] w-[18px] h-[18px]" viewBox="0 0 18 18"><path d="M5 0l4 5H6v8H4V5H1z" fill="#444"/><path d="M13 18l-4-5h3V5h2v8h3z" fill="#666"/></svg>
      <span class="ml-[9px] w-[24px] font-bold text-[14px] text-[#111]">UA</span>
      <span class="ml-[6px] w-[44px] text-[#111] tracking-[0.2px]">12:19</span>
      <svg class="ml-[5px] w-[16px] h-[17px]" viewBox="0 0 16 17"><path d="M8 1v7" stroke="#777" stroke-width="1.800"/><path d="M4 4a6.500 6.500 0 1 0 8 0" fill="none" stroke="#777" stroke-width="1.600"/></svg>
      <svg class="ml-[5px] w-[38px] h-[25px] bg-black shrink-0" viewBox="0 0 38 25"><path d="M0 25V20l2-4 1 6 3-4 2 3 2-8 2 6 2-16 1 14 3-3 2 4 3-8 1 6 3-2 2 3 2-5 2 4 3 2v5z" fill="#18e018"/></svg>
    </div>
  </body>
</html>
